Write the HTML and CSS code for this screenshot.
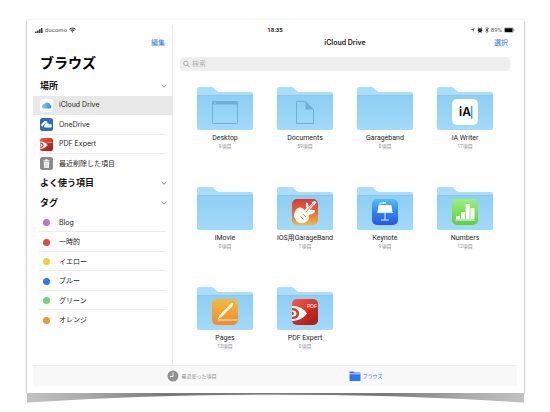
FILE: index.html
```
<!DOCTYPE html>
<html lang="ja">
<head>
<meta charset="utf-8">
<title>ブラウズ</title>
<link rel="stylesheet" href="styles.css">
</head>
<body>
<svg class="defs" aria-hidden="true">
  <defs>
    <linearGradient id="front" x1="0" y1="0" x2="0" y2="1"><stop offset="0" stop-color="#8dcef2"/><stop offset="1" stop-color="#a2dafa"/></linearGradient>
    <linearGradient id="gred" x1="0" y1="0" x2="0" y2="1"><stop offset="0" stop-color="#d93a3c"/><stop offset=".5" stop-color="#e8672f"/><stop offset="1" stop-color="#f3b740"/></linearGradient>
    <linearGradient id="gblue" x1="0" y1="0" x2="0" y2="1"><stop offset="0" stop-color="#4fc0fa"/><stop offset=".5" stop-color="#2f83f0"/><stop offset="1" stop-color="#2b55e2"/></linearGradient>
    <linearGradient id="ggreen" x1="0" y1="0" x2="0" y2="1"><stop offset="0" stop-color="#9bf07c"/><stop offset="1" stop-color="#5bd03c"/></linearGradient>
    <linearGradient id="gorange" x1="0" y1="0" x2="0" y2="1"><stop offset="0" stop-color="#f5b93c"/><stop offset="1" stop-color="#ef8b30"/></linearGradient>
    <linearGradient id="gpdf" x1="0" y1="0" x2="1" y2="1"><stop offset="0" stop-color="#f0604a"/><stop offset=".5" stop-color="#db3527"/><stop offset="1" stop-color="#a91f19"/></linearGradient>
    <linearGradient id="gcloud" x1="0" y1="0" x2="1" y2="0"><stop offset="0" stop-color="#7fd0fb"/><stop offset="1" stop-color="#3b82ef"/></linearGradient>
    <linearGradient id="curl" x1="0" y1="0" x2="1" y2="0"><stop offset="0" stop-color="#c2c2c2"/><stop offset=".12" stop-color="#a9aaa9"/><stop offset=".28" stop-color="#777a77"/><stop offset=".72" stop-color="#777a77"/><stop offset=".88" stop-color="#a9aaa9"/><stop offset="1" stop-color="#c2c2c2"/></linearGradient>
    <clipPath id="tile"><rect width="26" height="26" rx="5"/></clipPath>
    <symbol id="folder" viewBox="0 0 56 44">
      <path d="M0 3Q0 1 2 1H14Q15.500 1 16.500 2L20 5.200Q21 6 22.500 6H54Q56 6 56 8V20H0Z" fill="#a9defb"/>
      <path d="M0 10Q0 9 1 9H55Q56 9 56 10V42Q56 44 54 44H2Q0 44 0 42Z" fill="url(#front)"/>
      <path d="M.5 9.400H55.500" stroke="#82c6ec" stroke-width=".6"/>
    </symbol>
    <symbol id="pdf" viewBox="0 0 26 26">
      <g clip-path="url(#tile)">
        <rect width="26" height="26" fill="url(#gpdf)"/>
        <path d="M0 22L24 8L26 10V26H0Z" fill="#a81813" opacity=".35"/>
        <path d="M0 7C7 7 12 9.500 15 14.500C11 19.500 7 21.500 0 22Z" fill="#fff"/>
        <path d="M0 9Q7 9 7 14.500Q7 20 0 20Z" fill="#da3526"/>
        <path d="M0 11.200Q4.500 11.200 4.500 14.500Q4.500 17.800 0 17.800Z" fill="#fff"/>
        <circle cx="0" cy="14.500" r="1.800" fill="#c92c20"/>
      </g>
      <text class="pdf-text" x="15" y="9">PDF</text>
    </symbol>
    <symbol id="chevron" viewBox="0 0 8 6"><path d="M1.500 1.800L4 4.200L6.500 1.800" fill="none" stroke="#8b8b8b"/></symbol>
  </defs>
</svg>

<div class="frame">
  <div class="screen">
    <header class="status">
      <div class="carrier">
        <svg width="8" height="6" viewBox="0 0 8 6" aria-hidden="true"><path d="M.8 6V4.500M2.800 6V3.500M4.800 6V2.300M6.800 6V1" stroke="#222" stroke-width="1.400"/></svg>
        <span>docomo</span>
        <svg width="7" height="6" viewBox="0 0 7 6" aria-hidden="true"><path d="M.5 2.300Q3.500-.4 6.500 2.300M1.700 3.600Q3.500 2.100 5.300 3.600" fill="none" stroke="#333" stroke-width="1.100"/><path d="M2.500 4.500Q3.500 3.800 4.500 4.500L3.500 5.700Z" fill="#333"/></svg>
      </div>
      <time>18:35</time>
      <div class="indicators">
        <svg width="5" height="6" viewBox="0 0 5 6" aria-hidden="true"><path d="M.4 3L4.600 1L3 5.500V3Z" fill="#555"/></svg>
        <svg width="6" height="6" viewBox="0 0 6 6" aria-hidden="true"><circle cx="3" cy="3.300" r="2.100" fill="#222"/><path d="M.7 1.700L2 .7M5.300 1.700L4 .7M1.500 5.500L2 5M4.500 5.500L4 5" stroke="#222" stroke-width=".9"/></svg>
        <svg width="4" height="6" viewBox="0 0 4 6" aria-hidden="true"><path d="M.6 1.700L3.300 4.200L2 5.500V.5L3.300 1.800L.6 4.300" fill="none" stroke="#333" stroke-width=".7"/></svg>
        <span>89%</span>
        <svg width="11" height="6" viewBox="0 0 11 6" aria-hidden="true"><rect x=".3" y=".8" width="9.200" height="4.600" rx=".9" fill="#fff" stroke="#777" stroke-width=".5"/><rect x=".8" y="1.200" width="7.800" height="3.800" rx=".4" fill="#000"/><path d="M10.200 2.300V4" stroke="#888" stroke-width=".7"/></svg>
      </div>
    </header>

    <aside class="sidebar">
      <div class="edit-row"><button class="action">編集</button></div>
      <h1>ブラウズ</h1>
      <nav class="sections">
        <section class="section places">
          <button class="heading">場所<svg width="8" height="6" aria-hidden="true"><use href="#chevron"/></svg></button>
          <a class="item selected" href="#icloud">
            <svg class="glyph" viewBox="0 0 26 26" aria-hidden="true"><rect width="26" height="26" rx="5" fill="#fff"/><path d="M6.500 19A4 4 0 0 1 6 11.500A4 4 0 0 1 9.500 9.500A6 6 0 0 1 20.300 11.500A3.900 3.900 0 0 1 20 19Z" fill="url(#gcloud)"/></svg>
            <span class="name">iCloud Drive</span></a>
          <a class="item" href="#onedrive">
            <svg class="glyph" viewBox="0 0 26 26" aria-hidden="true"><rect width="26" height="26" rx="5" fill="#2a6cc0"/><path d="M3.500 16.500A3.500 3.500 0 0 1 5.500 10.500A5.500 5.500 0 0 1 15.500 8.500L12 10.500L8 13L5.500 17Z" fill="#fff"/><path d="M9.500 19.500A3.500 3.500 0 0 1 9.500 13.500A5 5 0 0 1 18.500 12A4 4 0 0 1 21.500 19.500Z" fill="#fff" stroke="#2a6cc0" stroke-width=".8"/></svg>
            <span class="name">OneDrive</span></a>
          <a class="item" href="#pdf-expert">
            <svg class="glyph" viewBox="0 0 26 26" aria-hidden="true"><use href="#pdf"/></svg>
            <span class="name">PDF Expert</span></a>
          <a class="item" href="#deleted">
            <svg class="glyph" viewBox="0 0 26 26" aria-hidden="true"><rect width="26" height="26" rx="5" fill="#8b8b8f"/><path d="M7 6.500H19V8.500H7ZM10.500 4.500H15.500V6.500H10.500ZM7.500 9.500H18.500L17.800 22H8.200Z" fill="#f2f2f2"/><path d="M10.800 11V20.500M13 11V20.500M15.200 11V20.500" stroke="#c4c4c6" stroke-width=".8"/></svg>
            <span class="name">最近削除した項目</span></a>
        </section>
        <section class="section favorites">
          <button class="heading">よく使う項目<svg width="8" height="6" aria-hidden="true"><use href="#chevron"/></svg></button>
        </section>
        <section class="section tags">
          <button class="heading">タグ<svg width="8" height="6" aria-hidden="true"><use href="#chevron"/></svg></button>
          <a class="item" href="#blog"><i class="dot purple"></i><span class="name">Blog</span></a>
          <a class="item" href="#temporary"><i class="dot red"></i><span class="name">一時的</span></a>
          <a class="item" href="#yellow"><i class="dot yellow"></i><span class="name">イエロー</span></a>
          <a class="item" href="#blue"><i class="dot blue"></i><span class="name">ブルー</span></a>
          <a class="item" href="#green"><i class="dot green"></i><span class="name">グリーン</span></a>
          <a class="item" href="#orange"><i class="dot orange"></i><span class="name">オレンジ</span></a>
        </section>
      </nav>
    </aside>

    <main class="content">
      <div class="title-row"><h2>iCloud Drive</h2><button class="action">選択</button></div>
      <label class="search">
        <svg width="7" height="8" viewBox="0 0 7 8" aria-hidden="true"><circle cx="2.900" cy="3.400" r="2.200" fill="none" stroke="#9a9a9a" stroke-width=".8"/><path d="M4.500 5.100L6.500 7.200" stroke="#9a9a9a" stroke-width=".8"/></svg>
        <input type="search" placeholder="検索" aria-label="検索">
      </label>
      <div class="folders">
        <a class="folder" href="#desktop"><svg viewBox="0 0 56 44" aria-hidden="true"><use href="#folder"/><rect x="15.500" y="15.500" width="25" height="22" rx="1" fill="none" stroke="#6db0d4"/><path d="M15.500 15.500H40.500V18.500H15.500Z" fill="#6db0d4"/><path d="M17 17H19" stroke="#9bd3f2" stroke-width=".8"/></svg><span class="label">Desktop</span><small>9項目</small></a>
        <a class="folder" href="#documents"><svg viewBox="0 0 56 44" aria-hidden="true"><use href="#folder"/><path d="M19.500 15.500H28.500L36.500 23.500V37.500H19.500Z" fill="none" stroke="#6db0d4"/><path d="M28.500 15.500V23.500H36.500Z" fill="#6db0d4"/></svg><span class="label">Documents</span><small>59項目</small></a>
        <a class="folder" href="#garageband"><svg viewBox="0 0 56 44" aria-hidden="true"><use href="#folder"/></svg><span class="label">Garageband</span><small>0項目</small></a>
        <a class="folder" href="#ia-writer"><svg viewBox="0 0 56 44" aria-hidden="true"><use href="#folder"/><rect x="15" y="13" width="26" height="26" rx="5" fill="#fff"/><text class="ia-text" x="22" y="30">iA</text><path d="M34.700 20V33" stroke="#20b4f5" stroke-width="1.400"/></svg><span class="label">iA Writer</span><small>17項目</small></a>

        <a class="folder" href="#imovie"><svg viewBox="0 0 56 44" aria-hidden="true"><use href="#folder"/></svg><span class="label">iMovie</span><small>0項目</small></a>
        <a class="folder" href="#ios-garageband"><svg viewBox="0 0 56 44" aria-hidden="true"><use href="#folder"/><g transform="translate(15 13)"><rect width="26" height="26" rx="5" fill="url(#gred)"/><path d="M12.500 11.500C10 6.500 4 8.500 3 13C1.500 15 1.500 18 3.500 20C5 24.500 11 25.500 13.500 23C16.500 22 17.500 19 16.500 16.500C18.500 14.500 22 15.500 23 12.500C23.300 11 22 10.500 20.500 11.200C19.800 10 18.500 10.500 17.500 11L16.500 10C16.800 8 16.500 5 15 3.300C13.500 4 13.500 6.500 14.500 8.500Z" fill="#fff"/><path d="M12.500 15L21.500 4.500" stroke="#fff" stroke-width="2.400"/><path d="M20 3L23 2L24.500 3.500L22 6.500Z" fill="#fff"/><path d="M13.500 13.500L21.500 4.500M8.500 17.500L11.500 20.500M11 15L14 18" stroke="#db573a" stroke-width=".7"/></g></svg><span class="label">iOS用GarageBand</span><small>1項目</small></a>
        <a class="folder" href="#keynote"><svg viewBox="0 0 56 44" aria-hidden="true"><use href="#folder"/><g transform="translate(15 13)"><rect width="26" height="26" rx="5" fill="url(#gblue)"/><path d="M6.500 6H19.500L20.500 13H5.500Z" fill="#fff"/><path d="M5 13.500H21M8 6V4H12M13 14V21M9 21H17" stroke="#e4efff" fill="none"/><path d="M11 3H14V4.500H11Z" fill="#fff"/></g></svg><span class="label">Keynote</span><small>9項目</small></a>
        <a class="folder" href="#numbers"><svg viewBox="0 0 56 44" aria-hidden="true"><use href="#folder"/><g transform="translate(15 13)"><rect width="26" height="26" rx="5" fill="url(#ggreen)"/><path d="M4 17H8V20H4ZM9 13H13V20H9ZM13.700 5H17.700V20H13.700ZM18.500 9H22.500V20H18.500ZM3.500 20.600H22.500V21.500H3.500Z" fill="#fff"/></g></svg><span class="label">Numbers</span><small>12項目</small></a>

        <a class="folder" href="#pages"><svg viewBox="0 0 56 44" aria-hidden="true"><use href="#folder"/><g transform="translate(15 13)"><rect width="26" height="26" rx="5" fill="url(#gorange)"/><path d="M5.500 20.500L7.500 16.500L19 4.500Q20.500 3.500 21.200 4.600Q21.500 5.500 20.500 7L9.500 18Z" fill="#fff"/><path d="M5.500 21H25.500" stroke="#fff3df" stroke-width=".9"/><path d="M15 9.500L17 11" stroke="#f0a035" stroke-width=".6"/></g></svg><span class="label">Pages</span><small>13項目</small></a>
        <a class="folder" href="#pdf-folder"><svg viewBox="0 0 56 44" aria-hidden="true"><use href="#folder"/><use href="#pdf" x="15" y="13" width="26" height="26"/></svg><span class="label">PDF Expert</span><small>0項目</small></a>
      </div>
    </main>

    <footer class="tabs">
      <button class="tab"><svg width="12" height="12" viewBox="0 0 12 12" aria-hidden="true"><circle cx="6" cy="6" r="5.500" fill="#929292"/><path d="M6 2.500V6.500H3" fill="none" stroke="#fff" stroke-width=".9"/></svg>最近使った項目</button>
      <button class="tab current"><svg width="12" height="12" viewBox="0 0 12 12" aria-hidden="true"><path d="M.5 1.500H4.500L5.500 2.500H11.500V3.500H.5ZM.5 4.200H11.500V11H.5Z" fill="#2f74f6"/></svg>ブラウズ</button>
    </footer>
  </div>
  <svg class="curl" viewBox="0 0 498 10" preserveAspectRatio="none" aria-hidden="true"><path d="M0 0H498V9.500Q370 1.500 249 1.500Q128 1.500 0 9.500Z" fill="url(#curl)"/></svg>
</div>
</body>
</html>
```
FILE: styles.css
```
* {
  box-sizing: border-box;
}

body {
  display: flex;
  min-height: 100vh;
  margin: 0;
  padding: 20px 26px 19px 27px;
  background: #fff;
  color: #1c1c1c;
  font-family: Inter, "Noto Sans CJK JP", sans-serif;
  font-size: 7px;
  line-height: 10px;
}

button,
input {
  padding: 0;
  border: 0;
  background: none;
  color: inherit;
  font: inherit;
}

a {
  color: inherit;
  text-decoration: none;
}

h1,
h2 {
  margin: 0;
}

.defs {
  position: absolute;
  width: 0;
  height: 0;
}

.frame {
  position: relative;
  display: flex;
  flex: 1;
  padding: 5px 7px 7px 6px;
  background: #fff;
  box-shadow: 0 1px 2px rgba(0, 0, 0, 0.5);
}

.curl {
  position: absolute;
  top: 100%;
  left: 0;
  width: 100%;
  height: 10px;
  filter: blur(0.5px);
}

.screen {
  display: grid;
  flex: 1;
  grid-template: 9px 1fr 21px / 140px 1fr;
}

/* Status bar */

.status {
  z-index: 1;
  grid-area: 1 / 1 / 2 / 3;
  display: grid;
  grid-template-columns: 1fr auto 1fr;
  align-items: center;
  padding: 0 2px;
  font-family: Roboto, sans-serif;
  font-size: 6px;
  line-height: 9px;
}

.status time {
  font-weight: 700;
}

.carrier,
.indicators {
  display: flex;
  align-items: center;
  gap: 2px;
  color: #555;
}

.indicators {
  justify-content: flex-end;
}

/* Sidebar */

.sidebar {
  grid-area: 1 / 1 / 3 / 2;
  display: flex;
  flex-direction: column;
  padding: 13px 0 35px;
  border-right: 1px solid #e9e9e9;
}

.edit-row {
  display: flex;
  justify-content: flex-end;
  padding-right: 7px;
}

.action {
  color: #2f7cf6;
}

h1 {
  padding: 5px 7px 3px;
  font-size: 14px;
  font-weight: 600;
  line-height: 20px;
  color: #000;
}

.sections {
  display: flex;
  flex: 1;
  flex-direction: column;
}

.section {
  display: flex;
  flex-direction: column;
}

.places {
  flex: 5 1 0;
}

.favorites {
  flex: 1 1 0;
}

.tags {
  flex: 7 1 0;
}

.heading {
  display: flex;
  flex: 1 1 0;
  align-items: center;
  justify-content: space-between;
  padding: 0 4px 0 7px;
  font-size: 9px;
  font-weight: 600;
  color: #111;
}

.item {
  display: flex;
  flex: 1 1 0;
  align-items: center;
  padding: 0 6px 0 7px;
}

.selected {
  background: #e8e8e8;
}

.name {
  padding-left: 6px;
}

.item:not(.selected) {
  background: linear-gradient(#ebebeb, #ebebeb) bottom / calc(100% - 12px) 1px no-repeat;
}

.item:last-child {
  background: none;
}

.glyph {
  width: 13px;
  height: 13px;
}

.dot {
  width: 7px;
  height: 7px;
  margin: 0 3px;
  border-radius: 50%;
}

.purple { background: #bd6fdc; }
.red { background: #ea4436; }
.yellow { background: #f7cb40; }
.blue { background: #2f74f6; }
.green { background: #6dd66c; }
.orange { background: #f2952f; }

/* Folder browser */

.content {
  grid-area: 1 / 2 / 3 / 3;
  padding: 13px 7px 0;
}

.title-row {
  display: grid;
  grid-template-columns: 1fr auto 1fr;
}

.title-row h2 {
  grid-column: 2;
  font-size: 7px;
  font-weight: 600;
}

.title-row .action {
  justify-self: end;
  padding-right: 2px;
}

.search {
  display: flex;
  align-items: center;
  gap: 2px;
  height: 14px;
  margin-top: 9px;
  padding: 0 3px;
  border-radius: 4px;
  background: #efefef;
}

.search input {
  flex: 1;
  min-width: 0;
  outline: 0;
}

.search input::placeholder {
  color: #b0b0b0;
}

.folders {
  display: grid;
  grid-template-columns: repeat(4, 1fr);
  row-gap: 36px;
  padding: 15px 5px 0;
}

.folder {
  display: flex;
  flex-direction: column;
  align-items: center;
}

.folder svg {
  width: 56px;
  height: 44px;
}

.label {
  margin-top: 3px;
  font-family: Roboto, "Noto Sans CJK JP", sans-serif;
  white-space: nowrap;
}

.folder small {
  font-family: Roboto, "Noto Sans CJK JP", sans-serif;
  font-size: 5px;
  line-height: 7px;
  color: #8e8e8e;
}

.ia-text {
  font-size: 12px;
  font-weight: 600;
  fill: #000;
}

.pdf-text {
  font-family: "Liberation Sans", sans-serif;
  font-size: 5px;
  fill: #fff;
}

/* Tab bar */

.tabs {
  grid-area: 3 / 1 / 4 / 3;
  display: flex;
  justify-content: center;
  gap: 132px;
  border-top: 1px solid #ebebeb;
  background: #f8f8f8;
}

.tab {
  display: flex;
  align-items: center;
  gap: 2px;
  font-size: 5px;
  color: #8e8e8e;
}

.current {
  color: #2f74f6;
}
```
